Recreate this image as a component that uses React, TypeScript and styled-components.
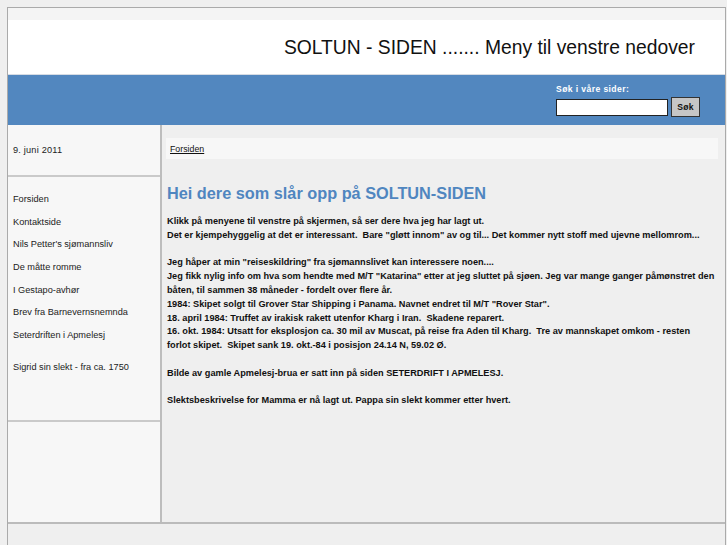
import type { FC } from 'react';
import styled, { createGlobalStyle } from 'styled-components';

const GlobalStyle = createGlobalStyle`
  html, body {
    margin: 0;
    padding: 0;
    background: #efefef;
    font-family: "Liberation Sans", Arial, sans-serif;
    color: #111;
  }
`;

const StyledPage = styled.div`
  margin: 7px 0 0 7px;
  width: 719px;
  box-sizing: border-box;
  border: 1px solid #aaa;
  border-bottom: none;
  background: #efefef;
`;

const StyledTopStrip = styled.div`
  height: 12px;
  background: #f4f4f4;
`;

const StyledHeader = styled.div`
  height: 54px;
  background: #fff;
  border-bottom: 1px solid #d6dce4;
  display: flex;
  align-items: center;
  justify-content: flex-end;
  padding-right: 30px;
`;

const StyledTitle = styled.h1`
  margin: 0;
  font-size: 19.3px;
  font-weight: normal;
  color: #111;
  padding-top: 2px;
`;

const StyledBlueBar = styled.div`
  height: 50px;
  background: #5287bf;
  display: flex;
  justify-content: flex-end;
  padding-right: 25px;
`;

const StyledSearch = styled.form`
  display: flex;
  flex-direction: column;
  padding-top: 9px;
`;

const StyledSearchLabel = styled.label`
  font-size: 8.6px;
  font-weight: bold;
  color: #fff;
  letter-spacing: 0.4px;
  margin-bottom: 3px;
`;

const StyledSearchRow = styled.div`
  display: flex;
  align-items: center;
  gap: 3px;
`;

const StyledInput = styled.input`
  width: 112px;
  height: 17px;
  box-sizing: border-box;
  border: 1px solid #222;
  background: #fff;
  padding: 0;
`;

const StyledButton = styled.button`
  width: 29px;
  height: 20px;
  box-sizing: border-box;
  border: 1px solid #333;
  background: #c6c6c6;
  font-family: "Liberation Sans", Arial, sans-serif;
  font-size: 8.6px;
  font-weight: bold;
  letter-spacing: 0.3px;
  color: #111;
  padding: 0;
`;

const StyledColumns = styled.div`
  display: flex;
  height: 397px;
`;

const StyledSidebar = styled.div`
  width: 152px;
  background: #f7f7f7;
  border-right: 2px solid #bdbdbd;
  display: flex;
  flex-direction: column;
`;

const StyledSideSection = styled.div<{ $height?: number }>`
  height: ${({ $height }) => ($height ? `${$height}px` : 'auto')};
  flex: ${({ $height }) => ($height ? 'none' : '1')};
  border-bottom: ${({ $height }) => ($height ? '2px solid #cacaca' : 'none')};
  padding-left: 5px;
  font-size: 9.2px;
  color: #222;
`;

const StyledDate = styled.div`
  height: 50px;
  display: flex;
  align-items: center;
  letter-spacing: 0.2px;
`;

const StyledMenu = styled.ul`
  list-style: none;
  margin: 0;
  padding: 11px 0 0;
`;

const StyledMenuItem = styled.li<{ $gap?: boolean }>`
  height: 22.7px;
  line-height: 22.7px;
  margin-top: ${({ $gap }) => ($gap ? '9px' : '0')};
`;

const StyledMain = styled.div`
  flex: 1;
  padding: 13px 7px 0 4px;
`;

const StyledCrumbs = styled.div`
  height: 21px;
  background: #f7f7f7;
  display: flex;
  align-items: center;
  padding-left: 4px;
  font-size: 8.8px;
`;

const StyledCrumbLink = styled.a`
  color: #111;
  text-decoration: underline;
`;

const StyledHeading = styled.h2`
  margin: 25px 0 0 1px;
  font-size: 16.3px;
  font-weight: bold;
  color: #4f86c0;
`;

const StyledBody = styled.div`
  margin: 12px 0 0 1px;
  max-width: 548px;
  font-size: 9.2px;
  font-weight: bold;
  line-height: 13.8px;
  color: #111;
  white-space: pre-wrap;
`;

const StyledFooter = styled.div`
  height: 30px;
  border-top: 2px solid #bbb;
  background: #efefef;
`;

const menuItems = [
  'Forsiden',
  'Kontaktside',
  "Nils Petter's sjømannsliv",
  'De måtte romme',
  'I Gestapo-avhør',
  'Brev fra Barnevernsnemnda',
  'Seterdriften i Apmelesj',
];

const bodyLines = [
  'Klikk på menyene til venstre på skjermen, så ser dere hva jeg har lagt ut.',
  'Det er kjempehyggelig at det er interessant.  Bare "gløtt innom" av og til... Det kommer nytt stoff med ujevne mellomrom...',
  '',
  'Jeg håper at min "reiseskildring" fra sjømannslivet kan interessere noen....',
  'Jeg fikk nylig info om hva som hendte med M/T "Katarina" etter at jeg sluttet på sjøen. Jeg var mange ganger påmønstret den båten, til sammen 38 måneder - fordelt over flere år.',
  '1984: Skipet solgt til Grover Star Shipping i Panama. Navnet endret til M/T "Rover Star".',
  '18. april 1984: Truffet av irakisk rakett utenfor Kharg i Iran.  Skadene reparert.',
  '16. okt. 1984: Utsatt for eksplosjon ca. 30 mil av Muscat, på reise fra Aden til Kharg.  Tre av mannskapet omkom - resten forlot skipet.  Skipet sank 19. okt.-84 i posisjon 24.14 N, 59.02 Ø.',
  '',
  'Bilde av gamle Apmelesj-brua er satt inn på siden SETERDRIFT I APMELESJ.',
  '',
  'Slektsbeskrivelse for Mamma er nå lagt ut. Pappa sin slekt kommer etter hvert.',
];

const App: FC = () => {
  return (
    <>
      <GlobalStyle />
      <StyledPage>
        <StyledTopStrip />
        <StyledHeader>
          <StyledTitle>SOLTUN - SIDEN ....... Meny til venstre nedover</StyledTitle>
        </StyledHeader>
        <StyledBlueBar>
          <StyledSearch onSubmit={(e) => e.preventDefault()}>
            <StyledSearchLabel>Søk i våre sider:</StyledSearchLabel>
            <StyledSearchRow>
              <StyledInput type="text" />
              <StyledButton type="submit">Søk</StyledButton>
            </StyledSearchRow>
          </StyledSearch>
        </StyledBlueBar>
        <StyledColumns>
          <StyledSidebar>
            <StyledSideSection $height={50}>
              <StyledDate>9. juni 2011</StyledDate>
            </StyledSideSection>
            <StyledSideSection $height={243}>
              <StyledMenu>
                {menuItems.map((item) => (
                  <StyledMenuItem key={item}>{item}</StyledMenuItem>
                ))}
                <StyledMenuItem $gap>Sigrid sin slekt - fra ca. 1750</StyledMenuItem>
              </StyledMenu>
            </StyledSideSection>
            <StyledSideSection />
          </StyledSidebar>
          <StyledMain>
            <StyledCrumbs>
              <StyledCrumbLink href="#">Forsiden</StyledCrumbLink>
            </StyledCrumbs>
            <StyledHeading>Hei dere som slår opp på SOLTUN-SIDEN</StyledHeading>
            <StyledBody>{bodyLines.join('\n')}</StyledBody>
          </StyledMain>
        </StyledColumns>
        <StyledFooter />
      </StyledPage>
    </>
  );
};

export default App;
